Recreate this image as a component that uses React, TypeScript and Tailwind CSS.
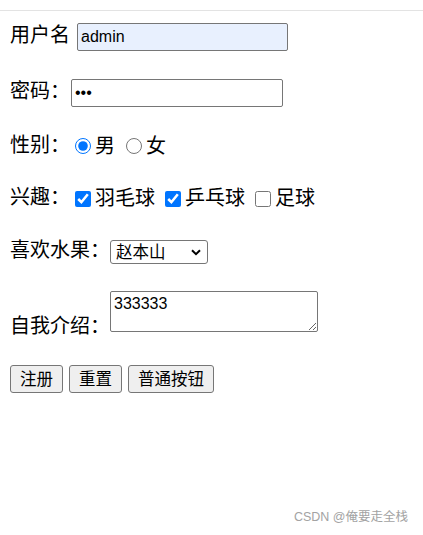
import { useState } from "react";

const fruits = ["赵本山", "刘德华", "周杰伦"];

function Label({ children }: { children: React.ReactNode }) {
  return <span className="text-[20px] leading-[20px] pb-[4px] whitespace-nowrap">{children}</span>;
}

export default function App() {
  const [gender, setGender] = useState("男");
  const [hobbies, setHobbies] = useState<string[]>(["羽毛球", "乒乓球"]);

  const toggle = (h: string) =>
    setHobbies((prev) => (prev.includes(h) ? prev.filter((x) => x !== h) : [...prev, h]));

  return (
    <div className="relative w-[423px] h-[535px] bg-white text-black font-['Liberation_Sans','Noto_Sans_CJK_SC',sans-serif] overflow-hidden">
      <div className="h-[10px]" />
      <div className="h-px bg-[#e3e3e3]" />

      <form className="px-[10px] flex flex-col">
        {/* 用户名 */}
        <div className="mt-[12px] h-[28px] flex items-center">
          <Label>用户名</Label>
          <input
            type="text"
            defaultValue="admin"
            className="ml-[7px] w-[211px] h-[28px] border border-[#767676] rounded-[2px] bg-[#e8f0fe] pl-[3px] text-[16px] outline-none"
          />
        </div>

        {/* 密码 */}
        <div className="mt-[28px] h-[28px] flex items-center">
          <Label>密码：</Label>
          <input
            type="password"
            defaultValue="123"
            className="ml-px w-[212px] h-[28px] border border-[#767676] rounded-[2px] pl-[3px] text-[16px] outline-none"
          />
        </div>

        {/* 性别 */}
        <div className="mt-[26px] h-[28px] flex items-center">
          <Label>性别：</Label>
          {["男", "女"].map((g, i) => (
            <label key={g} className="flex items-center">
              <input
                type="radio"
                name="gender"
                checked={gender === g}
                onChange={() => setGender(g)}
                className={`${i === 0 ? "ml-[5px]" : "ml-[11px]"} w-[16px] h-[16px] mb-[2px] accent-[#0075ff]`}
              />
              <span className="ml-[4px] text-[20px] leading-[20px] pb-[2px]">{g}</span>
            </label>
          ))}
        </div>

        {/* 兴趣 */}
        <div className="mt-[24px] h-[28px] flex items-center">
          <Label>兴趣：</Label>
          {["羽毛球", "乒乓球", "足球"].map((h, i) => (
            <label key={h} className="flex items-center">
              <input
                type="checkbox"
                checked={hobbies.includes(h)}
                onChange={() => toggle(h)}
                className={`${i === 0 ? "ml-[5px]" : "ml-[10px]"} w-[16px] h-[16px] accent-[#0075ff]`}
              />
              <span className="ml-[4px] text-[20px] leading-[20px] pb-[2px]">{h}</span>
            </label>
          ))}
        </div>

        {/* 喜欢水果 */}
        <div className="mt-[27px] h-[24px] flex items-center">
          <Label>喜欢水果：</Label>
          <div className="relative">
            <select className="appearance-none w-[98px] h-[24px] border border-[#767676] rounded-[3px] pl-[5px] text-[16.5px] leading-[20px] bg-white outline-none">
              {fruits.map((f) => (
                <option key={f}>{f}</option>
              ))}
            </select>
            <svg
              className="absolute right-[7px] top-[9px] pointer-events-none"
              width="10"
              height="7"
              viewBox="0 0 10 7"
              fill="none"
            >
              <path d="M1 1.2 5 5.2 9 1.2" stroke="black" strokeWidth="2" />
            </svg>
          </div>
        </div>

        {/* 自我介绍 */}
        <div className="mt-[27px] flex items-end">
          <span className="text-[20px] leading-[20px] translate-y-[4px] whitespace-nowrap">自我介绍：</span>
          <textarea
            defaultValue="333333"
            className="w-[208px] h-[41px] border border-[#767676] rounded-[2px] pl-[3px] pt-[3px] text-[16px] leading-[18px] resize-both outline-none"
          />
        </div>

        {/* 按钮 */}
        <div className="mt-[33px] flex gap-[6px]">
          {["注册", "重置", "普通按钮"].map((b) => (
            <button
              key={b}
              type="button"
              className="h-[28px] px-[9px] border border-[#767676] rounded-[3px] bg-[#efefef] text-[16.5px] leading-[18px]"
            >
              {b}
            </button>
          ))}
        </div>
      </form>

      <div className="absolute right-[15px] bottom-[11px] text-[12.5px] leading-[14px] text-[#a3a3a3]">
        CSDN @俺要走全栈
      </div>
    </div>
  );
}
